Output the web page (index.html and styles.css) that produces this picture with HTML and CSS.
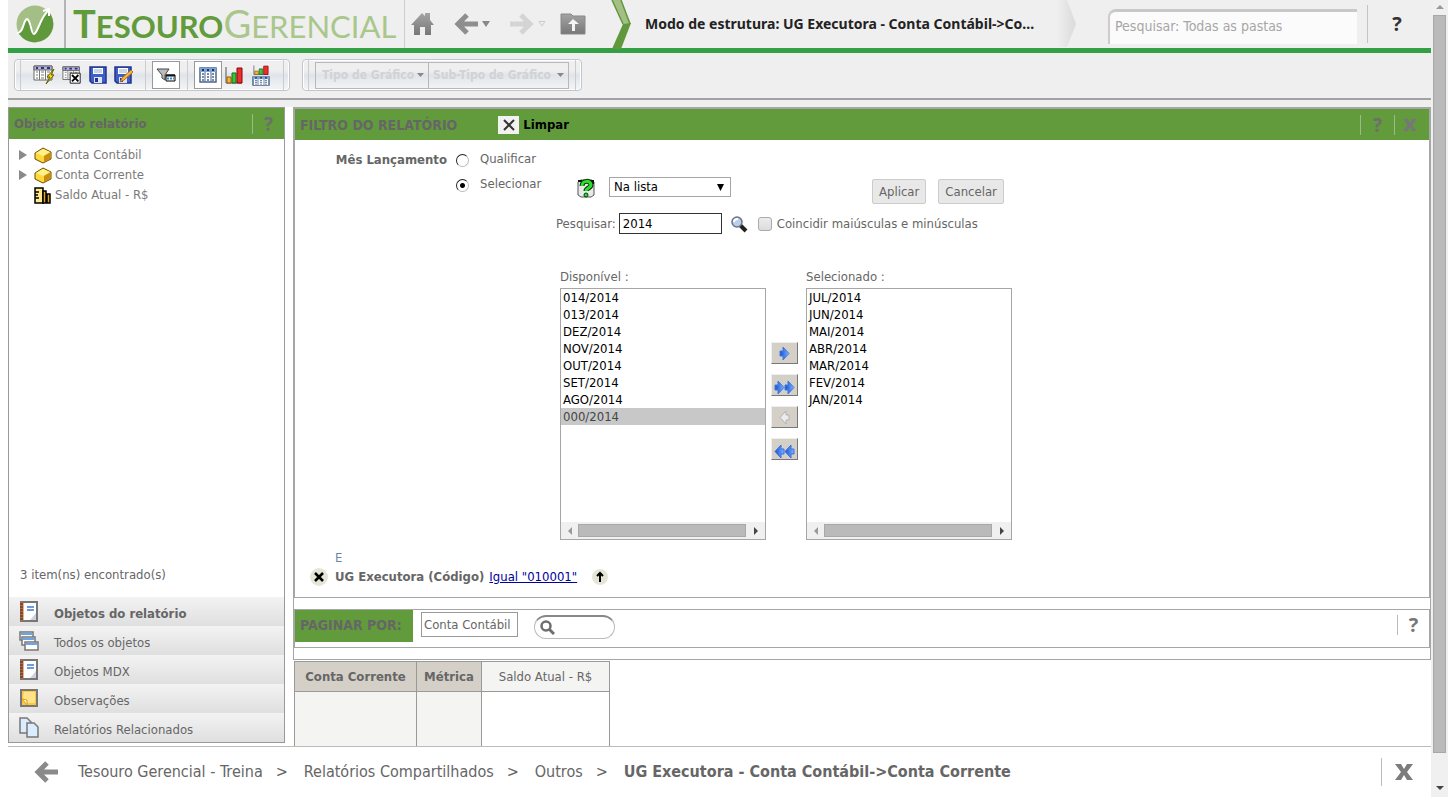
FILE: index.html
```html
<!DOCTYPE html>
<html lang="pt-BR">
<head>
<meta charset="utf-8">
<title>Tesouro Gerencial</title>
<link rel="stylesheet" href="styles.css">
</head>
<body>
<svg class="defs" aria-hidden="true">
  <defs>
    <linearGradient id="gray" x1="0" y1="0" x2="0" y2="1"><stop offset="0" stop-color="#a4a4a4"/><stop offset="1" stop-color="#777"/></linearGradient>
    <linearGradient id="blue" x1="0" y1="0" x2="1" y2="0"><stop offset="0" stop-color="#1450d0"/><stop offset="1" stop-color="#7db4ff"/></linearGradient>
    <symbol id="arrow" viewBox="0 0 26 24"><path d="m14 3-9 9 9 9M5 12h20" fill="none" stroke-width="5"/></symbol>
    <symbol id="cross" viewBox="0 0 18 18"><path d="M0 1h6l3 5 3-5h6l-6 8 6 8h-6l-3-5-3 5H0l6-8z"/></symbol>
    <symbol id="grid" viewBox="0 0 20 16"><path d="M1 1h18v14H1z" fill="#fff" stroke="#666"/><path d="M1 1h18v4H1z" fill="#b4b4d8" stroke="#666"/><path d="M3 3h2m3 0h3m3 0h3" stroke="#30308c" stroke-width="2"/><path d="M6.500 5v10m6-10v10" stroke="#777"/><path d="M3 7h2m-2 3h2m-2 3h2m3-6h3m-3 3h3m-3 3h3m3-6h3m-3 3h3m-3 3h3" stroke="#777"/></symbol>
    <symbol id="disk" viewBox="0 0 18 18"><path d="M1 1h16v16H3l-2-2z" fill="#3c5fc8" stroke="#20348c" stroke-width="1.500"/><path d="M4 2h10v6H4z" fill="#fff"/><path d="M5 4h8M5 6h8" stroke="#8ea8d8"/><path d="M5 11h8v6H5z" fill="#dfe3ee"/><path d="M6 12h3v4H6z" fill="#20348c"/></symbol>
    <symbol id="cube" viewBox="0 0 18 17"><path d="m1 6 8-5 8 4v7l-8 4-8-4z" fill="#ffd83c" stroke="#6d4c00"/><path d="m2 6 7-4 7 3-7 4z" fill="#fff08a"/><path d="m10 9 6-3.500V12l-6 3z" fill="#c98c10"/></symbol>
    <symbol id="book" viewBox="0 0 20 22"><path d="M2 1h16v19H2z" fill="#fff" stroke="#777" stroke-width="2"/><path d="M3 1v19" stroke="#b8683c" stroke-width="3"/><path d="M1 3h3M1 6h3M1 9h3M1 12h3M1 15h3M1 18h3" stroke="#542b18"/><path d="M8 6h7M8 9h7" stroke="#6d9be0" stroke-width="2"/><path d="m11 19 6-7v7z" fill="#cdd3dc"/></symbol>
    <symbol id="bars" viewBox="0 0 18 18" preserveAspectRatio="none"><path d="M1 1v16h16" fill="none" stroke="#555"/><path d="M2 11h4v6H2z" fill="#f0c020" stroke="#a05010"/><path d="M7 7h4v10H7z" fill="#40c040" stroke="#107010"/><path d="M12 2h5v15h-5z" fill="#e83030" stroke="#900000"/></symbol>
    <symbol id="bluetable" viewBox="0 0 18 16" preserveAspectRatio="none"><path d="M1 1h16v14H1z" fill="#fff" stroke="#4b678f" stroke-width="1.500"/><path d="M1 1h16v4H1z" fill="#7fa3d3"/><path d="M3 3h2m3 0h2m3 0h2" stroke="#14366b" stroke-width="2"/><path d="M6 5v10m6-10v10" stroke="#4b678f"/><path d="M3 7h2m-2 3h2m-2 3h2m3-6h2m-2 3h2m-2 3h2m3-6h2m-2 3h2m-2 3h2" stroke="#4b678f" stroke-width="1.500"/></symbol>
    <symbol id="right" viewBox="0 0 11 15"><path d="M1 5h3V1l6 6.500L4 14v-4H1z" fill="url(#blue)" stroke="#4778dc"/></symbol>
  </defs>
</svg>
<div class="app">
  <div class="main">
    <header class="top">
      <svg class="logo-mark" viewBox="0 0 38 38"><circle cx="19" cy="19" r="18.500" fill="#a3bf86"/><path d="M1 27c6-1 6-11 10-13 5 1 5 14 8 15 4-1 6-15 13-23l3 4A18.500 18.500 0 0 1 4 30z" fill="#60993b"/><path d="M1 28c7 0 6-13 10-14 4 1 4 15 7 15 4-1 6-17 15-24" fill="none" stroke="#fff" stroke-width="2"/><path d="m27 6 6-2v7" fill="none" stroke="#fff" stroke-width="2"/></svg>
      <h1 class="brand"><span class="brand-a">T<small>ESOURO</small></span><span class="brand-b">G<small>ERENCIAL</small></span></h1>
      <nav class="nav">
        <button class="plain" aria-label="Início"><svg width="24" height="24" viewBox="0 0 24 24"><path d="M1 13 12 1l3 3V1h5v7l4 5h-3v10h-6v-8h-5v8H4V13z" fill="url(#gray)"/></svg></button>
        <button class="plain back" aria-label="Voltar"><svg width="26" height="24" stroke="#8e8e8e"><use href="#arrow"/></svg></button>
        <svg class="caret" width="8" height="6" viewBox="0 0 8 6"><path d="M0 0h8L4 6z" fill="#888"/></svg>
        <button class="plain fwd" aria-label="Avançar"><svg width="26" height="24" viewBox="0 0 26 24"><path d="m12 3 9 9-9 9M21 12H1" fill="none" stroke="#d4d4d4" stroke-width="5"/></svg></button>
        <svg class="caret" width="8" height="6" viewBox="0 0 8 6"><path d="M1 .5h6L4 5z" fill="none" stroke="#ccc"/></svg>
        <button class="plain up" aria-label="Pasta acima"><svg width="26" height="22" viewBox="0 0 26 22"><path d="M1 1h10l2 2h12v18H1z" fill="url(#gray)" stroke="#888"/><path d="m13 6-5 5h4v7h3v-7h4z" fill="#f4f4f4"/></svg></button>
      </nav>
      <svg class="chevron" viewBox="0 0 22 49"><path d="M1 0h9l10 24-5 1H12z" fill="#a3bf86"/><path d="m12 24 8-1L10 49H1z" fill="#62983d"/><path d="M1 0 12 24M10 0l9 24" fill="none" stroke="#62983d" stroke-width="1.500"/></svg>
      <h2 class="title">Modo de estrutura: UG Executora - Conta Contábil-&gt;Co...</h2>
      <svg class="chevron-end" viewBox="0 0 20 48"><defs><linearGradient id="fade"><stop offset="0" stop-color="#efefef"/><stop offset="1" stop-color="#dadada"/></linearGradient></defs><path d="M0 0h10l9 24-9 23H0z" fill="url(#fade)"/></svg>
      <input class="search" type="text" aria-label="Pesquisar" placeholder="Pesquisar: Todas as pastas">
      <button class="plain help">?</button>
    </header>
    <div class="toolbar">
      <div class="group icons">
        <button class="plain" aria-label="Executar"><svg width="22" height="20" viewBox="0 0 22 20"><use href="#grid" width="20" height="16"/><path d="m21 4-7 8h3l-4 7 8-9h-3l3-6z" fill="#ffe800" stroke="#665a00"/></svg></button>
        <button class="plain" aria-label="Limpar grade"><svg width="20" height="20" viewBox="0 0 22 20"><use href="#grid" width="20" height="16"/><path d="M9 8h11v11H9z" fill="#fff" stroke="#111"/><path d="m11 10 7 7m0-7-7 7" stroke="#000" stroke-width="2"/></svg></button>
        <button class="plain" aria-label="Salvar"><svg width="18" height="18"><use href="#disk"/></svg></button>
        <button class="plain" aria-label="Salvar como"><svg width="19" height="18" viewBox="0 0 19 18"><use href="#disk" width="18" height="18"/><path d="m17 4-9 8-2 4 4-2 9-8z" fill="#ffb52d" stroke="#b07020"/></svg></button>
        <span class="sep wide"></span>
        <button class="boxed" aria-label="Filtro"><svg width="20" height="16" viewBox="0 0 20 16"><path d="M1 2h12L9 8v5l-3-2V8z" fill="#bbb" stroke="#444"/><path d="M10 8h9v6h-9z" fill="#fff" stroke="#000"/><path d="M10 8.500h9" stroke="#111" stroke-width="2"/><path d="M11 11.500h7" stroke="#398ad0" stroke-width="2" stroke-dasharray="2 1"/></svg></button>
        <span class="sep"></span>
        <button class="boxed" aria-label="Grade"><svg width="18" height="16"><use href="#bluetable"/></svg></button>
        <button class="plain chart-icon" aria-label="Gráfico"><svg width="18" height="18"><use href="#bars"/></svg></button>
        <button class="plain" aria-label="Grade e gráfico"><svg width="18" height="21" viewBox="0 0 18 21"><use href="#bars" x="1" width="16" height="10"/><use href="#bluetable" y="11" width="18" height="10"/></svg></button>
      </div>
      <div class="group charts">
        <select class="chart" disabled aria-label="Tipo de Gráfico"><option>Tipo de Gráfico</option></select>
        <select class="chart sub" disabled aria-label="Sub-Tipo de Gráfico"><option>Sub-Tipo de Gráfico</option></select>
      </div>
    </div>
    <div class="work">
      <aside class="side">
        <div class="bar"><h3>Objetos do relatório</h3><button class="plain bar-btn">?</button></div>
        <ul class="tree">
          <li><svg class="tri" width="8" height="10" viewBox="0 0 8 10"><path d="M0 0v10l8-5z" fill="#8a8a8a"/></svg><svg width="18" height="17"><use href="#cube"/></svg>Conta Contábil</li>
          <li><svg class="tri" width="8" height="10" viewBox="0 0 8 10"><path d="M0 0v10l8-5z" fill="#8a8a8a"/></svg><svg width="18" height="17"><use href="#cube"/></svg>Conta Corrente</li>
          <li class="leaf"><svg width="18" height="17" viewBox="0 0 18 17"><path d="M1 1h8v15H1z" fill="#ffe98c" stroke="#000" stroke-width="1.500"/><path d="M9 4h3v12H9zM13 7h3v9h-3z" fill="#e0a818" stroke="#000" stroke-width="1.500"/><path d="M1 5h4M1 8h3M1 11h4" stroke="#000" stroke-width="1.500"/></svg>Saldo Atual - R$</li>
        </ul>
        <p class="count">3 item(ns) encontrado(s)</p>
        <ul class="tabs">
          <li class="on"><svg width="20" height="22"><use href="#book"/></svg>Objetos do relatório</li>
          <li><svg width="20" height="22" viewBox="0 0 20 22"><g fill="#fff" stroke="#777" stroke-width="1.500"><path d="M1 2h13v8H1z"/><path d="M3 7h13v8H3z"/><path d="M6 12h13v8H6z"/></g><path d="M2 4h11M4 9h11M7 14h11" stroke="#6ba4e8" stroke-width="2"/></svg>Todos os objetos</li>
          <li><svg width="20" height="22"><use href="#book"/></svg>Objetos MDX</li>
          <li><svg width="20" height="22" viewBox="0 0 20 22"><path d="M2 2h16v16H2z" fill="#ffc83c" stroke="#777" stroke-width="2"/><path d="M5 4h11v11H9l-5-5z" fill="#ffe38b"/><path d="m3 11 5 1v5z" fill="#fff3bd" stroke="#d8a030"/></svg>Observações</li>
          <li><svg width="20" height="22" viewBox="0 0 20 22"><g fill="#dcecff" stroke="#777" stroke-width="1.500"><path d="M1 1h7l4 4v11H1z"/><path d="M8 6h7l4 4v10H8z"/></g></svg>Relatórios Relacionados</li>
        </ul>
      </aside>
      <section class="content">
        <div class="outer">
          <div class="filter">
            <div class="bar">
              <h3 class="caps">FILTRO DO RELATÓRIO</h3>
              <button class="plain clear"><span class="clear-x"><svg width="12" height="12" viewBox="0 0 12 12"><path d="m1 1 10 10M11 1 1 11" stroke="#333" stroke-width="2"/></svg></span>Limpar</button>
              <button class="plain bar-btn end">?</button>
              <button class="plain bar-btn close" aria-label="Fechar"><svg width="14" height="14" fill="#777"><use href="#cross"/></svg></button>
            </div>
            <div class="form">
              <div class="row r1"><strong class="lead">Mês Lançamento</strong><input type="radio" class="radio" name="modo" id="q"><label for="q">Qualificar</label></div>
              <div class="row r2">
                <span class="lead"></span><input type="radio" class="radio" name="modo" id="s" checked><label class="sel-label" for="s">Selecionar</label>
                <svg class="prompt" width="18" height="20" viewBox="0 0 18 20"><path d="m1 4 3-2h11l2 2v13l-3 2H4l-3-2z" fill="#e8eaea" stroke="#555"/><path d="M2 4V3h3m8 0h3v3" fill="none" stroke="#111" stroke-width="2"/><path d="M5 8c0-6 9-6 9-1 0 3-5 3-5 6" fill="none" stroke="#063806" stroke-width="5"/><path d="M5 8c0-6 9-6 9-1 0 3-5 3-5 6" fill="none" stroke="#2ee02e" stroke-width="3"/><circle cx="9" cy="17" r="2" fill="#2ee02e" stroke="#063806"/></svg>
                <select class="op" aria-label="Operador"><option>Na lista</option></select>
                <button class="btn apply">Aplicar</button><button class="btn">Cancelar</button>
              </div>
              <div class="row r3">
                <label for="p" class="find-label">Pesquisar:</label><input class="find" id="p" type="text" value="2014">
                <button class="plain mag" aria-label="Buscar"><svg width="18" height="18" viewBox="0 0 18 18"><path d="m9 9 7 7" stroke="#222" stroke-width="4"/><circle cx="7" cy="7" r="5" fill="#b8cff0" stroke="#6c7480" stroke-width="1.500"/><path d="M4 7c0-3 3-3 4-3" fill="none" stroke="#fff" stroke-width="2"/></svg></button>
                <input type="checkbox" class="check" id="c"><label for="c">Coincidir maiúsculas e minúsculas</label>
              </div>
              <div class="lists">
                <div class="list"><label for="a">Disponível :</label>
                  <div class="listbox"><select id="a" multiple><option>014/2014</option><option>013/2014</option><option>DEZ/2014</option><option>NOV/2014</option><option>OUT/2014</option><option>SET/2014</option><option>AGO/2014</option><option selected>000/2014</option></select>
                  <div class="hscroll"><svg width="4" height="8" viewBox="0 0 4 8"><path d="M4 0v8L0 4z" fill="#999"/></svg><i></i><svg width="4" height="8" viewBox="0 0 4 8"><path d="M0 0v8l4-4z" fill="#444"/></svg></div></div>
                </div>
                <div class="movers">
                  <button class="move" aria-label="Adicionar"><svg width="11" height="15"><use href="#right"/></svg></button>
                  <button class="move low" aria-label="Adicionar todos"><svg width="22" height="15" viewBox="0 0 22 15"><use href="#right" width="11" height="15"/><use href="#right" x="10" width="11" height="15"/></svg></button>
                  <button class="move" aria-label="Remover"><svg width="11" height="15" viewBox="0 0 11 15"><path d="M10 5H7V1L1 7.500 7 14v-4h3z" fill="#ececec" stroke="#b2b2b2"/></svg></button>
                  <button class="move low" aria-label="Remover todos"><svg width="22" height="15" viewBox="0 0 22 15"><g fill="url(#blue)" stroke="#3c6fe0"><path d="M10 5H7V1L1 7.500 7 14v-4h3z"/><path d="M20 5h-3V1l-6 6.500 6 6.500v-4h3z"/></g></svg></button>
                </div>
                <div class="list"><label for="b">Selecionado :</label>
                  <div class="listbox"><select id="b" multiple><option>JUL/2014</option><option>JUN/2014</option><option>MAI/2014</option><option>ABR/2014</option><option>MAR/2014</option><option>FEV/2014</option><option>JAN/2014</option></select>
                  <div class="hscroll"><svg width="4" height="8" viewBox="0 0 4 8"><path d="M4 0v8L0 4z" fill="#999"/></svg><i></i><svg width="4" height="8" viewBox="0 0 4 8"><path d="M0 0v8l4-4z" fill="#444"/></svg></div></div>
                </div>
              </div>
              <div class="and">E</div>
              <div class="cond">
                <button class="plain" aria-label="Remover condição"><svg width="18" height="18" viewBox="0 0 18 18"><circle cx="9" cy="9" r="9" fill="#e6e6d8"/><path d="m5 5 8 8m0-8-8 8" stroke="#000" stroke-width="2.500"/></svg></button>
                <strong>UG Executora (Código)</strong><a href="#">Igual "010001"</a>
                <button class="plain raise" aria-label="Subir"><svg width="16" height="16" viewBox="0 0 16 16"><circle cx="8" cy="8" r="8" fill="#e6e6d8"/><path d="M8 13V5M5 7l3-3 3 3" fill="none" stroke="#000" stroke-width="2"/></svg></button>
              </div>
            </div>
          </div>
          <div class="pager">
            <h3 class="caps">PAGINAR POR:</h3><button class="pill">Conta Contábil</button>
            <div class="round"><svg width="15" height="16" viewBox="0 0 15 16"><circle cx="6" cy="6" r="4.500" fill="none" stroke="#6e6e6e" stroke-width="2.500"/><path d="m9 9 5 5" stroke="#6e6e6e" stroke-width="3"/></svg><input type="text" aria-label="Localizar página"></div>
            <button class="plain pager-help">?</button>
          </div>
        </div>
        <table class="grid">
          <tr><th class="c1">Conta Corrente</th><th class="c2">Métrica</th><td class="c3">Saldo Atual - R$</td></tr>
          <tr class="rest"><td class="shade"></td><td class="shade"></td><td></td></tr>
        </table>
      </section>
    </div>
    <footer class="foot">
      <button class="plain" aria-label="Voltar"><svg width="26" height="24" stroke="#8a8a8a"><use href="#arrow"/></svg></button>
      <nav class="crumbs"><a href="#">Tesouro Gerencial - Treina</a><span>&gt;</span><a href="#">Relatórios Compartilhados</a><span>&gt;</span><a href="#">Outros</a><span>&gt;</span><strong>UG Executora - Conta Contábil-&gt;Conta Corrente</strong></nav>
      <button class="plain foot-close" aria-label="Fechar"><svg width="18" height="18" fill="#7c7c7c"><use href="#cross"/></svg></button>
    </footer>
  </div>
  <div class="vscroll"><svg width="8" height="4" viewBox="0 0 8 4"><path d="M0 4h8L4 0z" fill="#999"/></svg><i></i><svg width="8" height="4" viewBox="0 0 8 4"><path d="M0 0h8L4 4z" fill="#444"/></svg></div>
</div>
</body>
</html>
```
FILE: styles.css
```css
* { box-sizing: border-box; }
body { margin: 0; background: #fff; color: #666; font: 13px/16px "DejaVu Sans Condensed", "Noto Sans", sans-serif; }
.defs { position: absolute; width: 0; height: 0; }
h1, h2, h3, p, ul { margin: 0; padding: 0; }
ul { list-style: none; }
button, input, select { font: inherit; color: inherit; margin: 0; }
svg { display: block; flex: none; }
.plain { border: 0; background: none; padding: 0; cursor: pointer; flex: none; }

.app { display: flex; height: 100vh; padding: 0 7px 7px 8px; }
.main { flex: 1; min-width: 0; display: flex; flex-direction: column; }
.vscroll { width: 17px; background: #f0f0f0; display: flex; flex-direction: column; align-items: center; padding: 5px 2px 7px; gap: 6px; }
.vscroll i { flex: 1; width: 13px; background: #bababa; border: 1px solid #a8a8a8; margin-bottom: 27px; }

.top { display: flex; align-items: center; height: 53px; background: #efefef; border-bottom: 5px solid #33a045; flex: none; }
.logo-mark { width: 38px; height: 38px; margin-left: 8px; }
.brand { display: flex; align-self: stretch; align-items: center; margin-left: 10px; padding-left: 7px; width: 341px; border-left: 2px solid #b4b4b4; border-right: 1px solid #ccc; font: 38px/48px "Lato", sans-serif; white-space: nowrap; }
.brand small { font-size: 31px; }
.brand-a { font-weight: 700; color: #629b3c; }
.brand-b { color: #a9c78b; }
.nav { display: flex; align-items: center; width: 206px; padding-left: 5px; }
.back { margin-left: 19px; }
.caret { margin-left: 3px; }
.fwd { margin-left: 19px; }
.up { margin-left: 14px; }
.chevron { width: 22px; height: 49px; align-self: flex-start; }
.title { width: 412px; margin-left: 12px; font: 700 14px/20px "Noto Sans", sans-serif; color: #222; white-space: nowrap; }
.chevron-end { width: 20px; height: 48px; }
.search { margin-left: auto; width: 249px; height: 35px; margin-top: 4px; border: 0; border-top: 3px solid #c8c8c8; border-left: 2px solid #ccc; border-radius: 8px 0 0 0; background: #fbfbfb; padding: 0 5px 3px; font-size: 14px; }
.search::placeholder { color: #a6a6a6; opacity: 1; }
.help { width: 64px; height: 38px; margin-left: 10px; border-left: 1px solid #c4c4c4; font: 700 20px/24px "Open Sans", sans-serif; color: #333; padding-right: 5px; }

.toolbar { display: flex; gap: 12px; align-items: flex-start; height: 47px; padding: 6px 6px 0; background: #efefef; border-bottom: 2px solid #a2a2a2; flex: none; }
.group { display: flex; align-items: center; height: 32px; border: 1px solid #c2c6ca; border-radius: 4px; background: linear-gradient(#efefef 35%, #e0e4ea 50%, #f0f2f4 90%); box-shadow: inset 0 0 0 1px #fff; }
.group::before, .group::after { content: ""; width: 1px; height: 30px; background: #c8ccd0; flex: none; }
.group::before { margin-left: 5px; }
.group::after { margin: 0 5px 0 auto; }
.icons { width: 276px; gap: 7px; }
.icons::before { margin-right: 5px; }
.sep { width: 1px; height: 32px; background: #ccc; margin: 0 -1px 0 0; }
.wide { margin-left: 5px; }
.boxed { width: 28px; height: 28px; padding: 0; border: 1px solid #999; background: #fff; display: grid; place-items: center; flex: none; }
.chart-icon { margin: 0 2px 0 -4px; }
.charts { width: 280px; }
.charts::before { margin-right: 6px; }
.chart { appearance: none; width: 114px; height: 27px; opacity: 1; border: 1px solid #b8b8b8; border-radius: 0; padding: 0 6px; color: #d0d2d4; font-weight: 700; font-size: 12px; background: url("data:image/svg+xml,%3Csvg xmlns='http://www.w3.org/2000/svg' width='7' height='4'%3E%3Cpath d='M0 0h7L3.500 4z' fill='%23888'/%3E%3C/svg%3E") no-repeat right 4px center transparent; }
.sub { width: 141px; margin-left: -1px; padding: 0 4px; }

.work { flex: 1; min-height: 0; display: flex; gap: 8px; background: linear-gradient(#efefef 7px, #fff 7px); padding-top: 7px; overflow: hidden; }
.side { width: 277px; flex: none; margin-bottom: 3px; border: 1px solid #999; display: flex; flex-direction: column; background: #fff; }
.bar { display: flex; align-items: center; height: 31px; background: #629b3c; padding-left: 5px; }
h3 { font-size: 13px; color: #666; }
.caps { font-size: 14px; }
.bar-btn { width: 32px; height: 20px; border-left: 1px solid #9cba86; font: 700 19px/20px "Open Sans", sans-serif; color: #6e6e6e; }
.side .bar-btn { margin-left: auto; }
.tree { padding: 6px 10px 0; color: #7a7a7a; flex: 1; }
.tree li { display: flex; align-items: center; height: 20px; gap: 3px; }
.tree .tri { margin-right: 4px; }
.leaf { padding-left: 15px; }
.count { padding: 0 11px 14px; color: #666; }
.tabs li { display: flex; align-items: center; gap: 15px; height: 29px; padding: 5px 10px 0; background: linear-gradient(#f3f3f3, #dfdfdf); }
.tabs svg { margin-top: -5px; }
.on { font-weight: 700; }

.content { flex: 1; min-width: 0; }
.outer { border: 1px solid #a6a6a6; height: 553px; background: #fff; }
.filter { border: 1px solid #a6a6a6; height: 490px; }
.bar .end { margin-left: auto; width: 34px; }
.clear { display: flex; align-items: center; gap: 4px; margin-left: 41px; color: #000; font-weight: 700; }
.clear-x { width: 21px; height: 18px; background: #f2f2f2; display: grid; place-items: center; }
.bar .close { display: grid; place-items: center; padding-right: 4px; width: 35px; }
.form { padding-top: 11px; }
.row { display: flex; align-items: flex-start; }
.lead { width: 152px; padding-top: 1px; text-align: right; flex: none; }
.radio { appearance: none; width: 13px; height: 13px; margin: 3px 11px 0 9px; border: 1px solid #bbb; border-top-color: #222; border-left-color: #222; border-radius: 50%; background: #fff; flex: none; }
.radio:checked { background: radial-gradient(circle, #000 2px, #fff 3px); }
.r1 { height: 25px; }
.r2 { height: 37px; }
.sel-label { width: 97px; }
.prompt { margin-top: 2px; }
.op { appearance: none; width: 122px; height: 20px; margin: 1px 141px 0 14px; padding: 0 4px; border: 1px solid #a6a6a6; color: #000; background: url("data:image/svg+xml,%3Csvg xmlns='http://www.w3.org/2000/svg' width='7' height='7'%3E%3Cpath d='M0 0h7L3.500 7z'/%3E%3C/svg%3E") no-repeat right 6px center #fff; border-radius: 0; }
.btn { height: 25px; margin-top: 3px; padding: 0 6px; border: 1px solid #ccc; border-radius: 2px; background: #e8e8e8; }
.apply { margin-right: 12px; }
.r3 { align-items: center; height: 21px; padding-left: 261px; }
.find { width: 103px; height: 21px; margin-left: 3px; padding: 0 3px; border: 1px solid #333; color: #000; }
.mag { margin: 0 10px 0 8px; }
.check { appearance: none; width: 14px; height: 14px; margin-right: 5px; border: 1px solid #aaa; border-radius: 3px; background: linear-gradient(#ececec, #dcdcdc); }
.lists { display: flex; padding: 35px 0 0 265px; }
.list label { display: block; height: 19px; }
.listbox { width: 206px; height: 252px; border: 1px solid #a6a6a6; display: flex; flex-direction: column; }
.listbox select { flex: 1; border: 0; outline: 0; padding: 0; overflow: hidden; color: #000; background: #fff; border-radius: 0; }
.listbox option { height: 17px; min-height: 17px; padding: 1px 2px 0; line-height: 16px; }
.listbox option:checked { background: #c8c8c8 linear-gradient(#c8c8c8, #c8c8c8); color: #444; }
.hscroll { display: flex; align-items: center; gap: 8px; height: 17px; padding: 0 7px; background: #f0f0f0; }
.hscroll svg:first-child { margin-right: -2px; }
.hscroll i { flex: 1; height: 13px; background: #bababa; border: 1px solid #a8a8a8; }
.movers { display: flex; flex-direction: column; gap: 10px; padding: 73px 8px 0 5px; }
.move { width: 27px; height: 22px; padding: 0; border: 1px solid #eee; border-right-color: #777; border-bottom-color: #777; background: #d4d0c8; display: grid; place-items: center; }
.low { padding-top: 4px; }
.and { padding: 10px 0 0 40px; color: #6f83a3; }
.cond { display: flex; align-items: center; padding-left: 15px; height: 22px; gap: 5px; }
.cond strong { margin-left: 2px; }
.cond a { color: #00009c; }
.raise { margin-left: 10px; }
.pager { display: flex; align-items: flex-start; height: 39px; margin-top: 11px; border: 1px solid #a6a6a6; }
.pager h3 { width: 118px; height: 32px; padding-left: 5px; line-height: 30px; background: #629b3c; }
.pill { height: 25px; margin: 2px 16px 0 8px; padding: 0 2px; border: 1px solid #999; background: #fff; width: 97px; text-align: left; }
.round { display: flex; align-items: center; width: 81px; height: 24px; margin-top: 5px; padding-left: 5px; border: 1px solid #bbb; border-top: 2px solid #888; border-radius: 12px; }
.round input { width: 50px; border: 0; outline: 0; background: none; }
.pager-help { width: 32px; height: 20px; margin: 5px 0 0 auto; border-left: 1px solid #bbb; font: 700 20px/20px "Open Sans", sans-serif; color: #777; }
.grid { margin: 1px 0 0 1px; border-collapse: collapse; }
.grid th, .grid td { border: 1px solid #999; padding: 0; height: 30px; text-align: center; }
.grid th { background: #d4d0c8; }
.c1 { width: 122px; }
.c2 { width: 65px; }
.c3 { width: 128px; background: #f4f4f2; }
.grid .rest td { height: 90px; }
.grid .shade { background: #f4f4f2; }

.foot { display: flex; align-items: center; height: 51px; border-top: 1px solid #bbb; padding-left: 25px; flex: none; background: #fff; font-size: 16px; line-height: 20px; }
.crumbs { display: flex; margin-left: 19px; gap: 13px; white-space: nowrap; }
.crumbs span { width: 15px; }
.crumbs a { color: inherit; text-decoration: none; }
.foot-close { width: 50px; height: 28px; margin-left: auto; border-left: 1px solid #bbb; padding-left: 13px; }
```
